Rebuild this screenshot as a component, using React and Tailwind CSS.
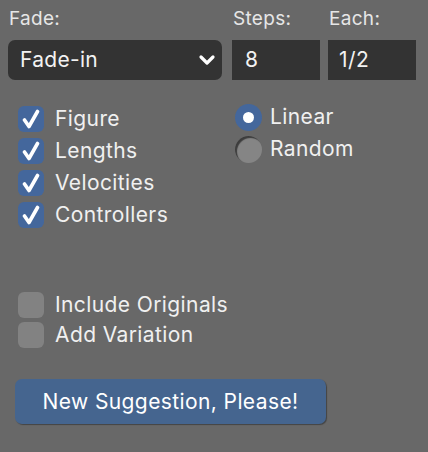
import React, { useState } from 'react';

const font = { fontFamily: 'Inter, "Liberation Sans", sans-serif' };

const Check = ({ label, checked, tight }) => (
  <div className={`flex items-center ${tight ? 'h-[30px]' : 'h-[32px]'}`}>
    {checked ? (
      <div className="w-[26px] h-[26px] rounded-[6px] bg-[#44679c] flex items-center justify-center">
        <svg width="18" height="20" viewBox="0 0 18 20">
          <path d="M2.5 11 L7 17.5 L15.5 2.5" fill="none" stroke="#fff" strokeWidth="3.6" strokeLinecap="round" strokeLinejoin="round" />
        </svg>
      </div>
    ) : (
      <div className="w-[26px] h-[26px] rounded-[6px] bg-[#828282]" />
    )}
    <span className="ml-[11px] text-[21px] tracking-[0.4px] text-[#f0f0f0]">{label}</span>
  </div>
);

const Radio = ({ label, checked }) => (
  <div className="flex items-center h-[32px]">
    {checked ? (
      <div className="w-[27px] h-[27px] rounded-full bg-[#44679c] flex items-center justify-center">
        <div className="w-[11px] h-[11px] rounded-full bg-white" />
      </div>
    ) : (
      <div className="w-[27px] h-[27px] rounded-full bg-[#858585] shadow-[inset_2px_2px_1px_rgba(0,0,0,0.55)]" />
    )}
    <span className="ml-[8px] text-[21px] tracking-[0.4px] text-[#f0f0f0]">{label}</span>
  </div>
);

export default function App() {
  const [mode] = useState('Fade-in');

  return (
    <div className="w-[428px] h-[452px] bg-[#686868] relative" style={font}>
      {/* top row */}
      <div className="flex pt-[5px] pl-[8px]">
        <div className="w-[214px]">
          <div className="text-[19px] tracking-[0.3px] text-[#e6e6e6] pl-[1px] h-[35px]">Fade:</div>
          <div className="h-[40px] rounded-[7px] bg-[#333333] flex items-center justify-between pl-[12px] pr-[6px]">
            <span className="text-[21px] tracking-[0.3px] text-[#f2f2f2]">{mode}</span>
            <svg width="18" height="14" viewBox="0 0 18 14">
              <path d="M3 4 L9 10 L15 4" fill="none" stroke="#fff" strokeWidth="3.2" strokeLinecap="round" strokeLinejoin="round" />
            </svg>
          </div>
        </div>
        <div className="w-[88px] ml-[10px]">
          <div className="text-[19px] tracking-[0.3px] text-[#e6e6e6] pl-[1px] h-[35px]">Steps:</div>
          <div className="h-[40px] bg-[#333333] flex items-center pl-[13px] text-[21px] text-[#f2f2f2]">8</div>
        </div>
        <div className="w-[88px] ml-[8px]">
          <div className="text-[19px] tracking-[0.3px] text-[#e6e6e6] pl-[1px] h-[35px]">Each:</div>
          <div className="h-[40px] bg-[#333333] flex items-center pl-[11px] text-[21px] tracking-[0.4px] text-[#f2f2f2]">1/2</div>
        </div>
      </div>

      {/* options */}
      <div className="flex mt-[23px] pl-[18px]">
        <div className="w-[217px]">
          <Check label="Figure" checked />
          <Check label="Lengths" checked />
          <Check label="Velocities" checked />
          <Check label="Controllers" checked />
        </div>
        <div className="-mt-[2px]">
          <Radio label="Linear" checked />
          <Radio label="Random" />
        </div>
      </div>

      <div className="pl-[18px] mt-[59px]">
        <Check label="Include Originals" tight />
        <Check label="Add Variation" tight />
      </div>

      <div className="pl-[15px] mt-[29px]">
        <button className="w-[311px] h-[45px] rounded-[7px] bg-[#45658f] text-[21px] tracking-[0.4px] text-white shadow-[1px_1px_1px_rgba(0,0,0,0.35)]">
          New Suggestion, Please!
        </button>
      </div>
    </div>
  );
}
